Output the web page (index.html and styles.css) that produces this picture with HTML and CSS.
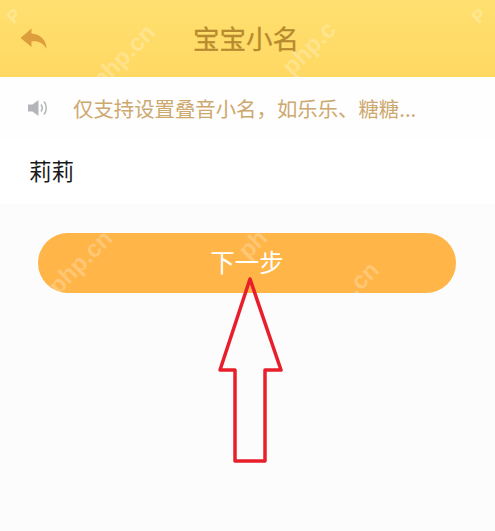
FILE: index.html
```html
<!DOCTYPE html>
<html lang="zh-CN">
  <head>
    <meta charset="UTF-8" />
    <title>宝宝小名</title>
    <link rel="stylesheet" href="styles.css">
  </head>
  <body>
    <div class="page">
      <header class="topbar">
        <svg class="back-icon" viewBox="0 0 28 22" width="28" height="22">
          <path d="M11.500 0.500 L0.500 10 L11.500 19 L11.500 13.500 C17 12.500 22.500 14 26.500 20.500 C26.500 12 20 6 11.500 5.500 Z" />
        </svg>
        <h1 class="title">宝宝小名</h1>
      </header>

      <div class="notice">
        <svg class="sound-icon" viewBox="0 0 20 18" width="20" height="18">
          <path class="cone" d="M0 5.500 H4.500 L10.500 1 V17 L4.500 12.500 H0 Z" />
          <path class="wave" d="M13 5.500 C14.500 7.500 14.500 10.500 13 12.500" />
          <path class="wave" d="M16 2.500 C19 6 19 12 16 15.500" />
        </svg>
        <span class="notice-text">仅支持设置叠音小名&#xFF0C;如乐乐、糖糖...</span>
      </div>

      <div class="name-row">莉莉</div>

      <div class="action">
        <button type="button" class="btn-next">下一步</button>
      </div>

      <!-- annotation and watermark lie over the page -->
      <svg class="arrow" viewBox="0 0 495 531" width="495" height="531">
        <polygon points="250,279 281,370 265,370 265,461 235,461 235,370 220,370" />
      </svg>
      <span class="mark mark-1">php.cn</span>
      <span class="mark mark-2">php.c</span>
      <span class="mark mark-3">php.cn</span>
      <span class="mark mark-4">ph</span>
      <span class="mark mark-5">.cn</span>
      <span class="mark mark-6">P</span>
      <span class="mark mark-7">P</span>
    </div>
  </body>
</html>
```

FILE: styles.css
```css
* {
  box-sizing: border-box;
  margin: 0;
  padding: 0;
}

body {
  font-family: "Noto Sans CJK SC", "Noto Sans", sans-serif;
  background-color: #fcfcfc;
}

.page {
  position: relative;
  width: 495px;
  height: 531px;
  overflow: hidden;
}

.topbar {
  position: relative;
  display: flex;
  align-items: center;
  justify-content: center;
  height: 77px;
  padding-bottom: 1px;
  padding-right: 3px;
  background: linear-gradient(#ffe070, #ffd862);
}

.back-icon {
  position: absolute;
  left: 20px;
  top: 28px;
  fill: #dd9f3e;
}

.title {
  font-size: 26.500px;
  font-weight: 400;
  line-height: 36px;
  color: #b78a2e;
  -webkit-text-stroke: 0.3px #b78a2e;
}

.notice {
  display: flex;
  align-items: center;
  height: 62px;
  padding-left: 28px;
  background-color: #fefefe;
}

.sound-icon {
  flex: none;
  margin-right: 25px;
}

.cone {
  fill: #b3b5b8;
}

.wave {
  fill: none;
  stroke: #b3b5b8;
  stroke-width: 1.500;
}

.notice-text {
  font-size: 20.400px;
  line-height: 28px;
  white-space: nowrap;
  color: #cda86f;
}

.name-row {
  height: 65px;
  padding-left: 29px;
  font-size: 22.500px;
  line-height: 63px;
  color: #1a1a1a;
  background-color: #ffffff;
}

.action {
  padding: 29px 39px 0 38px;
}

.btn-next {
  display: block;
  width: 100%;
  height: 60px;
  padding-bottom: 3px;
  border: none;
  border-radius: 30px;
  font-family: inherit;
  font-size: 24.500px;
  color: #ffffff;
  background-color: #ffb547;
}

.arrow {
  position: absolute;
  left: 0;
  top: 0;
  fill: none;
  stroke: #e81f2b;
  stroke-width: 3.500;
  stroke-linejoin: round;
}

.mark {
  position: absolute;
  font-family: "Liberation Sans", sans-serif;
  font-size: 24px;
  font-weight: 700;
  line-height: 28px;
  white-space: nowrap;
  color: rgba(255, 255, 255, 0.25);
  transform: rotate(-45deg);
}

.mark-1 {
  left: 84px;
  top: 42px;
}

.mark-2 {
  left: 277px;
  top: 34px;
}

.mark-3 {
  left: 41px;
  top: 248px;
}

.mark-4 {
  left: 238px;
  top: 230px;
}

.mark-5 {
  left: 345px;
  top: 264px;
}

.mark-6 {
  left: 8px;
  top: 2px;
  font-size: 18px;
}

.mark-7 {
  left: 473px;
  top: 2px;
  font-size: 18px;
}
```
